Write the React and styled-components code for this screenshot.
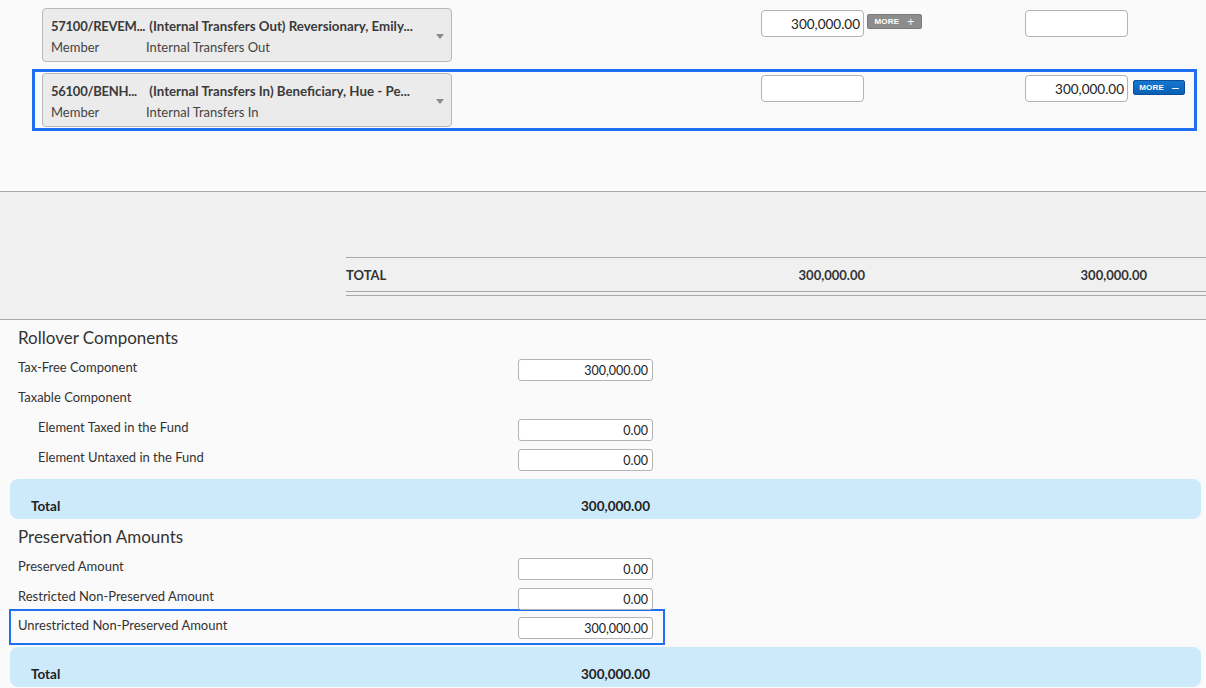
import React from 'react'
import styled, { createGlobalStyle } from 'styled-components'

const GlobalStyle = createGlobalStyle`
  body {
    margin: 0;
    background: #fafafa;
    font-family: "Lato", "Liberation Sans", sans-serif;
    color: #333;
  }
`

const Top = styled.section`
    height: 191px;
    padding-top: 4px;
    box-sizing: border-box;
    display: flex;
    flex-direction: column;
    gap: 3px;
`

const LineRow = styled.div`
    display: flex;
    align-items: flex-start;
    margin-left: 32px;
    width: 1165px;
    box-sizing: border-box;
    padding: 1px 7px;
    border: 3px solid ${p => (p.$active ? '#1f6ff0' : 'transparent')};
`

const Account = styled.div`
    position: relative;
    flex-shrink: 0;
    width: 410px;
    height: 54px;
    box-sizing: border-box;
    padding: 9px 0 0 8px;
    background: #ebebeb;
    border: 1px solid #b9b9b9;
    border-radius: 4px;
    display: grid;
    grid-template-columns: 95px 1fr;
    grid-auto-rows: 16px;
    row-gap: 5px;
    font-size: 13px;
    line-height: 16px;
`

const Code = styled.span`
    font-size: ${p => p.$size}px;
    letter-spacing: ${p => p.$track || 0}px;
    font-weight: 700;
    color: #3a3a3a;
    white-space: nowrap;
`

const Sub = styled.span`
    color: #444;
`

const Caret = styled.span`
    position: absolute;
    right: 7px;
    top: 25px;
    border-left: 4px solid transparent;
    border-right: 4px solid transparent;
    border-top: 5px solid #8a8a8a;
`

const Cell = styled.div`
    display: flex;
    flex-shrink: 0;
    align-items: flex-start;
    gap: ${p => p.$gap}px;
    width: ${p => p.$width}px;
    margin-left: ${p => p.$offset || 0}px;
    padding-top: 2px;
`

const AmountBox = styled.input`
    width: 103px;
    height: 27px;
    box-sizing: border-box;
    border: 1px solid #b3b3b3;
    border-radius: 4px;
    background: #fff;
    text-align: right;
    padding: 0 3px;
    font: 13.5px "Lato", "Liberation Sans", sans-serif;
    color: #222;
    outline: none;
`

const More = styled.button`
    display: flex;
    align-items: center;
    justify-content: center;
    gap: 8px;
    width: 55px;
    height: 15px;
    margin-top: ${p => p.$top}px;
    padding: 0;
    border-radius: 2px;
    border: 1px solid ${p => (p.$open ? '#0c4f96' : '#7a7a7a')};
    background: ${p => (p.$open ? 'linear-gradient(#1576cf, #0860b4)' : '#8d8d8d')};
    color: #fff;
    font: 700 8px "Liberation Sans", Arial, sans-serif;
    letter-spacing: 0.2px;
`

const Sign = styled.span`
    font-size: 12px;
    font-weight: 400;
    line-height: 10px;
`

const Band = styled.section`
    height: 129px;
    box-sizing: border-box;
    background: #eff0ef;
    border-top: 1px solid #a9a9a9;
    border-bottom: 1px solid #a9a9a9;
    padding: 65px 0 0 346px;
`

const TotalRow = styled.div`
    display: grid;
    grid-template-columns: 419px 100px 282px;
    align-items: center;
    height: 35px;
    box-sizing: border-box;
    padding-top: 1px;
    border-top: 1px solid #a9a9a9;
    border-bottom: 1px solid #a9a9a9;
    font-size: 13px;
    font-weight: 700;
    color: #333;
`

const Rule = styled.div`
    height: 1px;
    margin-top: 3px;
    background: #a9a9a9;
`

const Figure = styled.span`
    text-align: right;
`

const Form = styled.section`
    padding-top: 8px;
`

const Heading = styled.h3`
    margin: 0 0 8px 18px;
    font-size: 17px;
    line-height: 20px;
    font-weight: 400;
    color: #333;
`

const Row = styled.div`
    display: flex;
    align-items: flex-start;
    height: ${p => (p.$active ? 36 : 30)}px;
    box-sizing: border-box;
    ${p => p.$active
        ? `
    width: 656px;
    margin: -6px 0 0 9px;
    padding: 3px 0 0 7px;
    border: 2px solid #1f6ff0;
  `
        : `
    padding-left: 18px;
  `}
`

const Label = styled.span`
    width: ${p => (p.$indent ? 480 : 500)}px;
    padding: 3px 0 0 ${p => (p.$indent ? 20 : 0)}px;
    font-size: 13px;
    line-height: 16px;
    color: #333;
`

const FieldBox = styled.input`
    width: 135px;
    height: 22px;
    margin-top: 3px;
    box-sizing: border-box;
    border: 1px solid #b3b3b3;
    border-radius: 3px;
    background: #fff;
    text-align: right;
    padding: 0 4px;
    font: 12.5px "Lato", "Liberation Sans", sans-serif;
    color: #222;
    outline: none;
`

const SumBand = styled.div`
    display: flex;
    margin: ${p => p.$top}px 5px 8px 10px;
    height: 40px;
    box-sizing: border-box;
    padding: 19px 0 0 21px;
    background: #cdeafa;
    border-radius: 8px;
    font-size: 13.5px;
    line-height: 16px;
    font-weight: 700;
    color: #222;
`

const SumLabel = styled.span`
    width: 500px;
`

const SumValue = styled.span`
    width: 119px;
    text-align: right;
`

const lines = [
  { code: '57100/REVEM...', name: '\u00a0(Internal Transfers Out) Reversionary, Emily...', kind: 'Internal Transfers Out', debit: '300,000.00', credit: '' },
  { code: '56100/BENH...', name: '\u00a0(Internal Transfers In) Beneficiary, Hue - Pe...', kind: 'Internal Transfers In', debit: '', credit: '300,000.00', active: true },
]

function MoreButton({ open, top }) {
  return (
    <More $open={open} $top={top}>
      MORE <Sign>{open ? '\u2013' : '+'}</Sign>
    </More>
  )
}

export default function App() {
  return (
    <>
      <GlobalStyle />
      <Top>
        {lines.map(l => (
          <LineRow key={l.code} $active={l.active}>
            <Account>
              <Code $size={13} $track={-0.25}>{l.code}</Code>
              <Code $size={13.3}>{l.name}</Code>
              <Sub>Member</Sub>
              <Sub>{l.kind}</Sub>
              <Caret />
            </Account>
            <Cell $offset={309} $width={264} $gap={3}>
              <AmountBox readOnly value={l.debit} />
              {l.debit && <MoreButton top={4} />}
            </Cell>
            <Cell $width={160} $gap={5}>
              <AmountBox readOnly value={l.credit} />
              {l.credit && <MoreButton open top={5} />}
            </Cell>
          </LineRow>
        ))}
      </Top>

      <Band>
        <TotalRow>
          <span>TOTAL</span>
          <Figure>300,000.00</Figure>
          <Figure>300,000.00</Figure>
        </TotalRow>
        <Rule />
      </Band>

      <Form>
        <Heading>Rollover Components</Heading>
        <Row>
          <Label>Tax-Free Component</Label>
          <FieldBox readOnly value="300,000.00" />
        </Row>
        <Row>
          <Label>Taxable Component</Label>
        </Row>
        <Row>
          <Label $indent>Element Taxed in the Fund</Label>
          <FieldBox readOnly value="0.00" />
        </Row>
        <Row>
          <Label $indent>Element Untaxed in the Fund</Label>
          <FieldBox readOnly value="0.00" />
        </Row>
        <SumBand $top={3}>
          <SumLabel>Total</SumLabel>
          <SumValue>300,000.00</SumValue>
        </SumBand>

        <Heading>Preservation Amounts</Heading>
        <Row>
          <Label>Preserved Amount</Label>
          <FieldBox readOnly value="0.00" />
        </Row>
        <Row>
          <Label>Restricted Non-Preserved Amount</Label>
          <FieldBox readOnly value="0.00" />
        </Row>
        <Row $active>
          <Label>Unrestricted Non-Preserved Amount</Label>
          <FieldBox readOnly value="300,000.00" />
        </Row>
        <SumBand $top={2}>
          <SumLabel>Total</SumLabel>
          <SumValue>300,000.00</SumValue>
        </SumBand>
      </Form>
    </>
  )
}
